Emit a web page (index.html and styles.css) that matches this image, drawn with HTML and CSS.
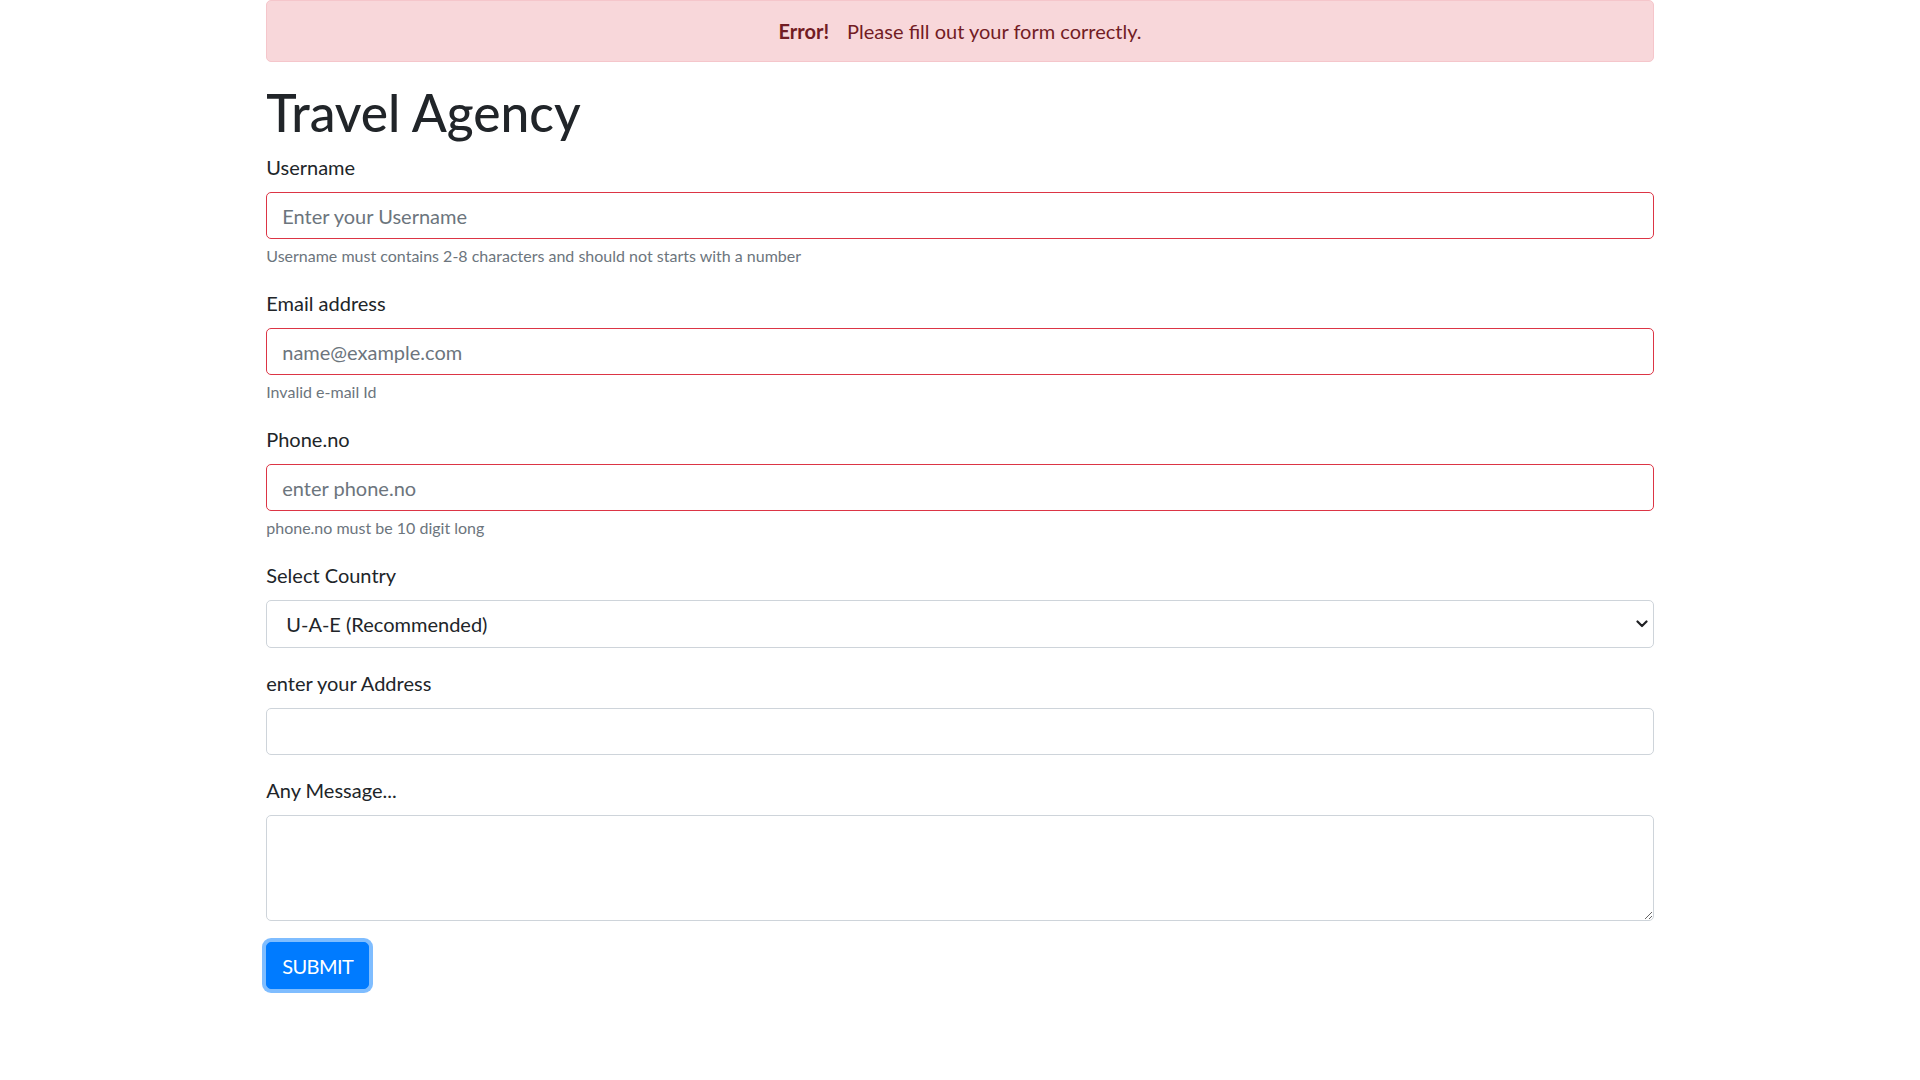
FILE: index.html
```html
<!DOCTYPE html>
<html lang="en">
<head>
<meta charset="utf-8">
<title>Travel Agency</title>
<link rel="stylesheet" href="styles.css">
</head>
<body>
<div class="container">
  <div class="alert" role="alert"><strong class="alert-strong">Error!</strong> Please fill out your form correctly.</div>
  <h1 class="title">Travel Agency</h1>
  <form class="form">
    <div class="form-group">
      <label class="form-label" for="username">Username</label>
      <input class="form-control is-invalid" type="text" id="username" placeholder="Enter your Username">
      <small class="form-text">Username must contains 2-8 characters and should not starts with a number</small>
    </div>
    <div class="form-group">
      <label class="form-label" for="email">Email address</label>
      <input class="form-control is-invalid" type="email" id="email" placeholder="name@example.com">
      <small class="form-text">Invalid e-mail Id</small>
    </div>
    <div class="form-group">
      <label class="form-label" for="phone">Phone.no</label>
      <input class="form-control is-invalid" type="text" id="phone" placeholder="enter phone.no">
      <small class="form-text">phone.no must be 10 digit long</small>
    </div>
    <div class="form-group">
      <label class="form-label" for="country">Select Country</label>
      <div class="select-wrap">
        <select class="form-control form-select" id="country">
          <option>U-A-E (Recommended)</option>
          <option>India</option>
          <option>USA</option>
        </select>
        <svg class="select-arrow" width="12" height="8" viewBox="0 0 12 8" aria-hidden="true"><path d="M1.5 1.5 L6 6 L10.5 1.5" fill="none" stroke="#202124" stroke-width="2.2" stroke-linecap="round" stroke-linejoin="round"/></svg>
      </div>
    </div>
    <div class="form-group">
      <label class="form-label" for="address">enter your Address</label>
      <input class="form-control" type="text" id="address">
    </div>
    <div class="form-group">
      <label class="form-label" for="message">Any Message...</label>
      <textarea class="form-control form-textarea" id="message" rows="3"></textarea>
    </div>
    <div class="form-actions">
      <button type="submit" class="btn btn-primary">SUBMIT</button>
    </div>
  </form>
</div>
</body>
</html>
```

FILE: styles.css
```css
* {
  box-sizing: border-box;
}

html, body {
  margin: 0;
  padding: 0;
  background: #ffffff;
}

body {
  font-family: Lato, "Noto Sans", "Liberation Sans", sans-serif;
  font-size: 20px;
  line-height: 1.5;
  color: #212529;
}

.container {
  max-width: 1425px;
  margin: 0 auto;
  padding: 0 18.75px;
}

.alert {
  background: #f8d7da;
  border: 1px solid #f5c6cb;
  border-radius: 5px;
  color: #721c24;
  text-align: center;
  padding: 15px 31.25px;
  height: 62px;
  margin-bottom: 20px;
}

.alert-strong {
  font-weight: 700;
  margin-right: 13px;
}

.title {
  font-size: 51.5px;
  font-weight: 500;
  line-height: 60px;
  height: 60px;
  margin: 0 0 10px;
}

.form {
  margin: 0;
}

.form-group {
  margin-bottom: 20px;
}

.form-label {
  display: block;
  margin-bottom: 10px;
  line-height: 30px;
  height: 30px;
}

.form-control {
  display: block;
  width: 100%;
  height: 47px;
  padding: 7px 15px;
  font-family: inherit;
  font-size: 20px;
  line-height: 1.5;
  color: #495057;
  background: #ffffff;
  border: 1px solid #ced4da;
  border-radius: 5px;
  outline: none;
  margin: 0;
}

.form-control::placeholder {
  color: #6c757d;
  opacity: 1;
}

.form-control.is-invalid {
  border-color: #dc3545;
}

.form-text {
  display: block;
  margin-top: 5px;
  font-size: 16px;
  line-height: 24px;
  height: 24px;
  color: #6c757d;
}

.select-wrap {
  position: relative;
}

.form-select {
  appearance: none;
  -webkit-appearance: none;
  height: 48px;
  padding-left: 19px;
  padding-right: 40px;
  color: #212529;
}

.select-arrow {
  position: absolute;
  right: 6px;
  top: 20px;
  pointer-events: none;
}

.form-textarea {
  height: 106px;
  resize: vertical;
}

.form-actions {
  display: flex;
  padding-top: 1px;
  padding-bottom: 10px;
}

.btn {
  display: block;
  height: 47px;
  font-family: inherit;
  font-size: 20px;
  line-height: 1.5;
  letter-spacing: -0.6px;
  padding: 7px 15px;
  border-radius: 5px;
  border: 1px solid transparent;
  cursor: pointer;
  margin: 0;
}

.btn-primary {
  color: #ffffff;
  background: #007bff;
  border-color: #007bff;
  box-shadow: 0 0 0 4px rgba(0, 123, 255, 0.5);
}
```
